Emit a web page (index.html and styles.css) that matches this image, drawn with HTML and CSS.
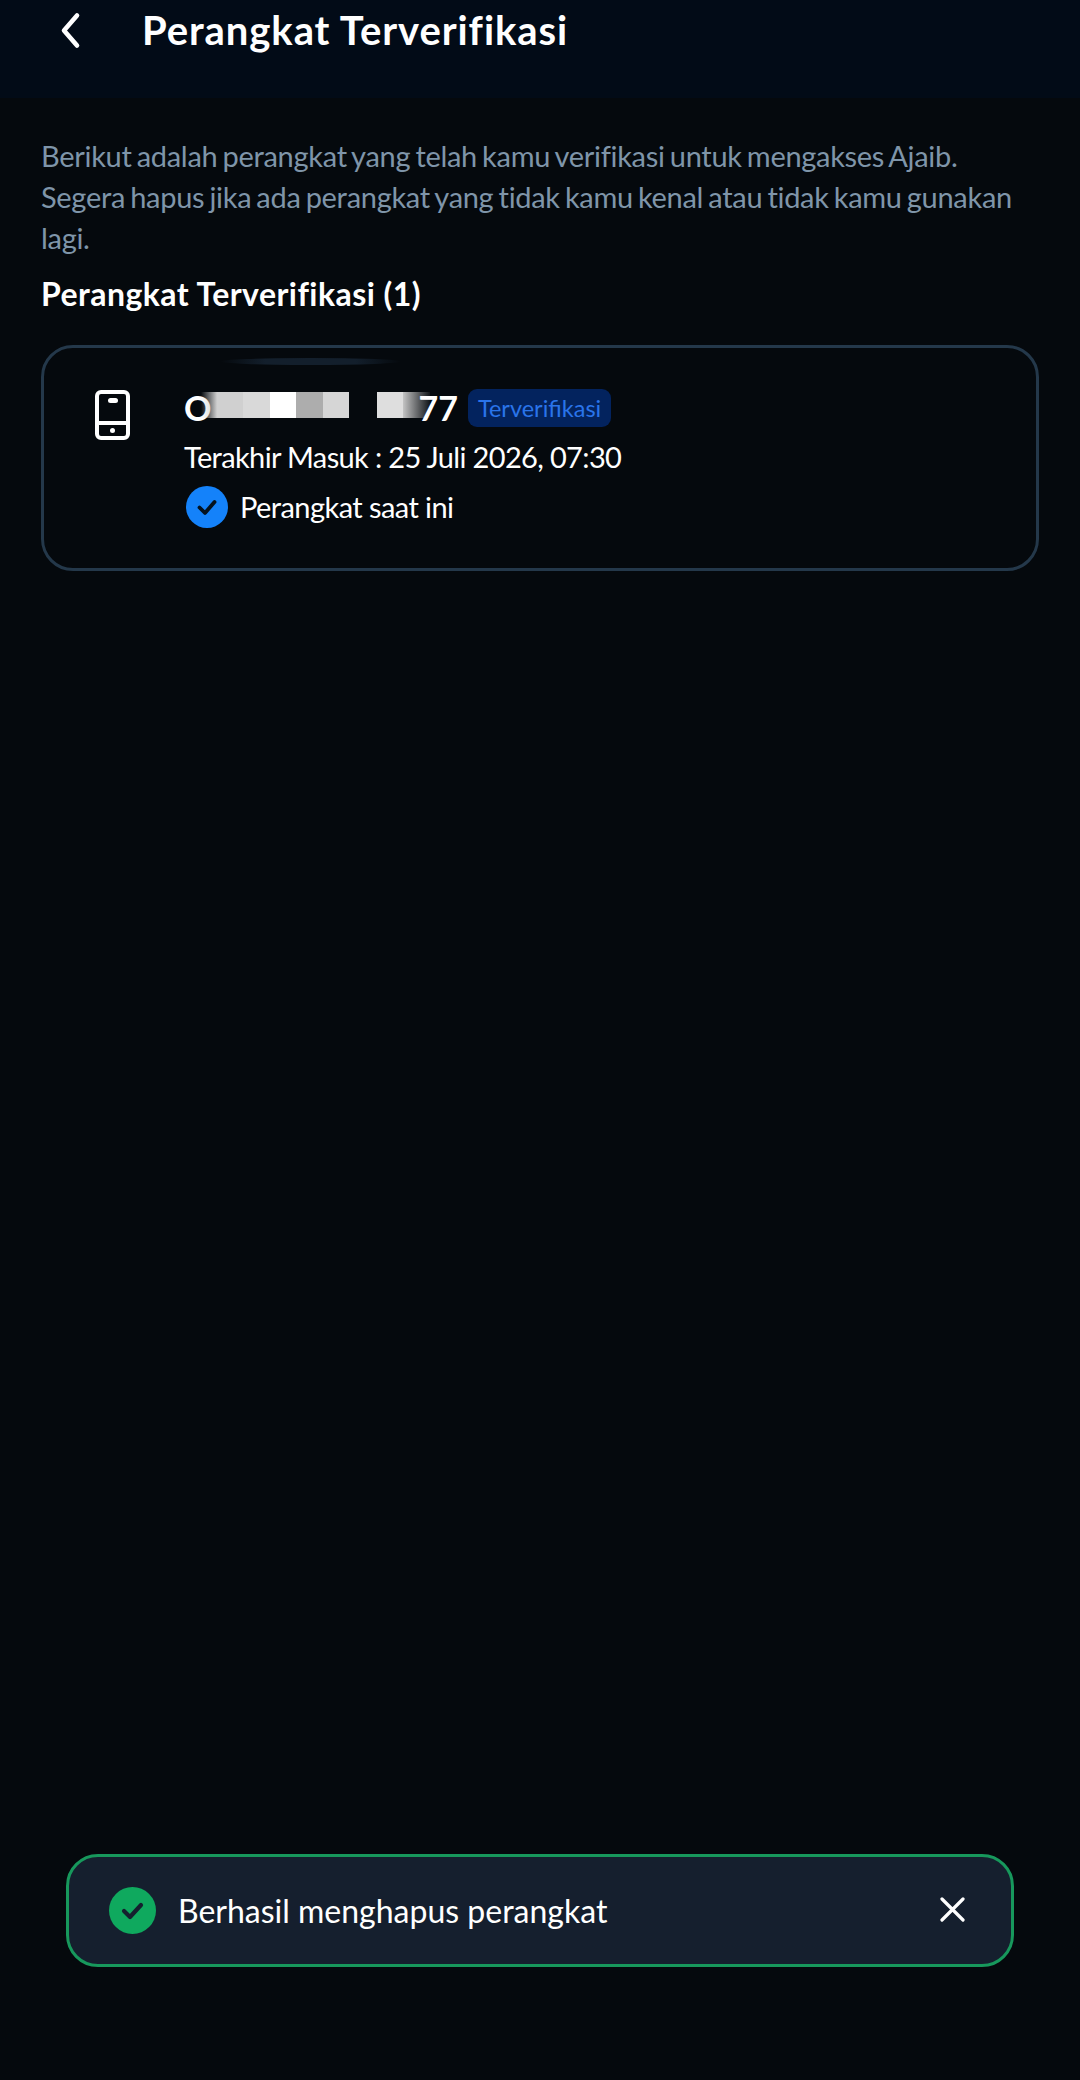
FILE: index.html
```html
<!DOCTYPE html>
<html lang="id">
<head>
  <meta charset="UTF-8">
  <meta name="viewport" content="width=device-width, initial-scale=1.0">
  <title>Perangkat Terverifikasi</title>
  <link rel="stylesheet" href="styles.css">
</head>
<body>
  <!-- Header -->
  <header class="topbar">
    <svg class="back-icon" width="22" height="38" viewBox="0 0 22 38">
      <path d="M17 3.5 L4 18.5 L17 33.5" fill="none" stroke="#fff" stroke-width="4.6" stroke-linecap="round" stroke-linejoin="round"/>
    </svg>
    <h1 class="topbar-title">Perangkat Terverifikasi</h1>
  </header>

  <!-- Main Content -->
  <main class="content">
    <p class="intro">Berikut adalah perangkat yang telah kamu verifikasi untuk mengakses Ajaib. Segera hapus jika ada perangkat yang tidak kamu kenal atau tidak kamu gunakan lagi.</p>
    <h2 class="section-title">Perangkat Terverifikasi (1)</h2>

    <div class="device-card">
      <span class="card-glow"></span>
      <svg class="device-icon" width="35" height="50" viewBox="0 0 35 50">
        <rect x="2" y="2" width="31" height="46" rx="4" fill="none" stroke="#fff" stroke-width="4"/>
        <path d="M2 33 H33" stroke="#fff" stroke-width="4"/>
        <rect x="13" y="8" width="10" height="5" rx="2.5" fill="#fff"/>
        <circle cx="17.5" cy="40.5" r="2.5" fill="#fff"/>
      </svg>
      <div class="device-info">
        <div class="device-name-row">
          <span class="device-name">O</span>
          <div class="mask">
            <span class="mask-fade-in"></span>
            <span class="mask-block mask-a"></span>
            <span class="mask-block mask-b"></span>
            <span class="mask-block mask-c"></span>
            <span class="mask-block mask-d"></span>
            <span class="mask-block mask-e"></span>
            <span class="mask-gap"></span>
            <span class="mask-block mask-f"></span>
            <span class="mask-fade-out"></span>
          </div>
          <span class="device-name device-name-end">77</span>
          <span class="badge">Terverifikasi</span>
        </div>
        <div class="last-login">Terakhir Masuk : 25 Juli 2026, 07:30</div>
        <div class="current-device">
          <svg width="42" height="42" viewBox="0 0 42 42">
            <circle cx="21" cy="21" r="21" fill="#1482fa"/>
            <path d="M13.5 21.5 L19 27 L28.5 16" fill="none" stroke="#04121f" stroke-width="3.8" stroke-linecap="round" stroke-linejoin="round"/>
          </svg>
          <span>Perangkat saat ini</span>
        </div>
      </div>
    </div>
  </main>

  <!-- Toast -->
  <div class="toast">
    <svg width="47" height="47" viewBox="0 0 47 47">
      <circle cx="23.5" cy="23.5" r="23.5" fill="#0fa95e"/>
      <path d="M15 24 L21 30 L32 18" fill="none" stroke="#15202e" stroke-width="4.2" stroke-linecap="round" stroke-linejoin="round"/>
    </svg>
    <span class="toast-text">Berhasil menghapus perangkat</span>
    <svg class="toast-close" width="25" height="25" viewBox="0 0 25 25">
      <path d="M2 2 L23 23 M23 2 L2 23" stroke="#fff" stroke-width="3.2" stroke-linecap="round"/>
    </svg>
  </div>
</body>
</html>
```

FILE: styles.css
```css
/* Page */
* {
  box-sizing: border-box;
}
body {
  font-family: Lato, "Noto Sans", sans-serif;
  margin: 0;
  width: 1080px;
  height: 2080px;
  position: relative;
  overflow: hidden;
  background: #05090d;
  color: #fff;
}

/* Header */
.topbar {
  height: 98px;
  display: flex;
  align-items: flex-start;
  padding: 12px 0 0 60px;
  background: #020b17;
}
.back-icon {
  flex: none;
}
.topbar-title {
  margin: -6px 0 0 60px;
  font-size: 40px;
  letter-spacing: 0.92px;
  line-height: 48px;
  font-weight: 700;
}

/* Content */
.content {
  padding: 37px 41px 0;
}
.intro {
  margin: 0;
  font-size: 29px;
  letter-spacing: -0.3px;
  word-spacing: -2px;
  line-height: 41px;
  color: #7f95a9;
}
.section-title {
  margin: 16px 0 0;
  font-size: 32px;
  letter-spacing: 0.45px;
  line-height: 40px;
  font-weight: 700;
}

/* Device card */
.device-card {
  position: relative;
  margin-top: 31px;
  width: 998px;
  height: 226px;
  display: flex;
  padding: 42px 0 0 51px;
  border: 3px solid #24384a;
  border-radius: 32px;
}
.card-glow {
  position: absolute;
  left: 176px;
  top: 10px;
  width: 181px;
  height: 7px;
  border-radius: 50%;
  background: linear-gradient(90deg, transparent, #131f2c 25%, #131f2c 75%, transparent);
}
.device-icon {
  flex: none;
}
.device-info {
  margin-left: 54px;
}
.device-name-row {
  display: flex;
  align-items: center;
  height: 44px;
  margin-top: -4px;
}
.device-name {
  font-size: 34px;
  font-weight: 700;
  line-height: 44px;
}
.device-name-end {
  position: relative;
  margin-left: -12px;
}
.mask {
  display: flex;
  height: 26px;
  margin-left: -10.5px;
  margin-top: -7px;
}
.mask-block {
  width: 26.5px;
  height: 100%;
}
.mask-fade-in {
  width: 16px;
  background: linear-gradient(90deg, rgba(220, 220, 220, 0), #cfcfcf);
}
.mask-a { background: #d0d0d0; }
.mask-b { background: #d9d9d9; }
.mask-c { background: #fff; }
.mask-d { background: #adadad; }
.mask-e { background: #d6d6d6; }
.mask-f { background: #dedede; }
.mask-gap {
  width: 27.5px;
}
.mask-fade-out {
  width: 27px;
  background: linear-gradient(90deg, #c4c4c4, rgba(120, 120, 120, 0.1));
}
.badge {
  margin-left: 10px;
  padding: 0 10px;
  height: 38px;
  line-height: 38px;
  font-size: 23.5px;
  color: #2a74ea;
  background: #03235e;
  border-radius: 9px;
}
.last-login {
  margin-top: 8px;
  font-size: 29px;
  letter-spacing: -0.65px;
  line-height: 38px;
}
.current-device {
  display: flex;
  align-items: center;
  gap: 12px;
  margin: 10px 0 0 2px;
  font-size: 29px;
  letter-spacing: -0.58px;
  line-height: 42px;
}

/* Toast */
.toast {
  position: absolute;
  left: 66px;
  top: 1854px;
  width: 948px;
  height: 113px;
  display: flex;
  align-items: center;
  padding: 0 46px 0 40px;
  background: #151f2e;
  border: 3px solid #17985c;
  border-radius: 32px;
}
.toast-text {
  flex: 1;
  margin-left: 22px;
  font-size: 32px;
}
.toast-close {
  flex: none;
  margin-top: -2px;
}
```
